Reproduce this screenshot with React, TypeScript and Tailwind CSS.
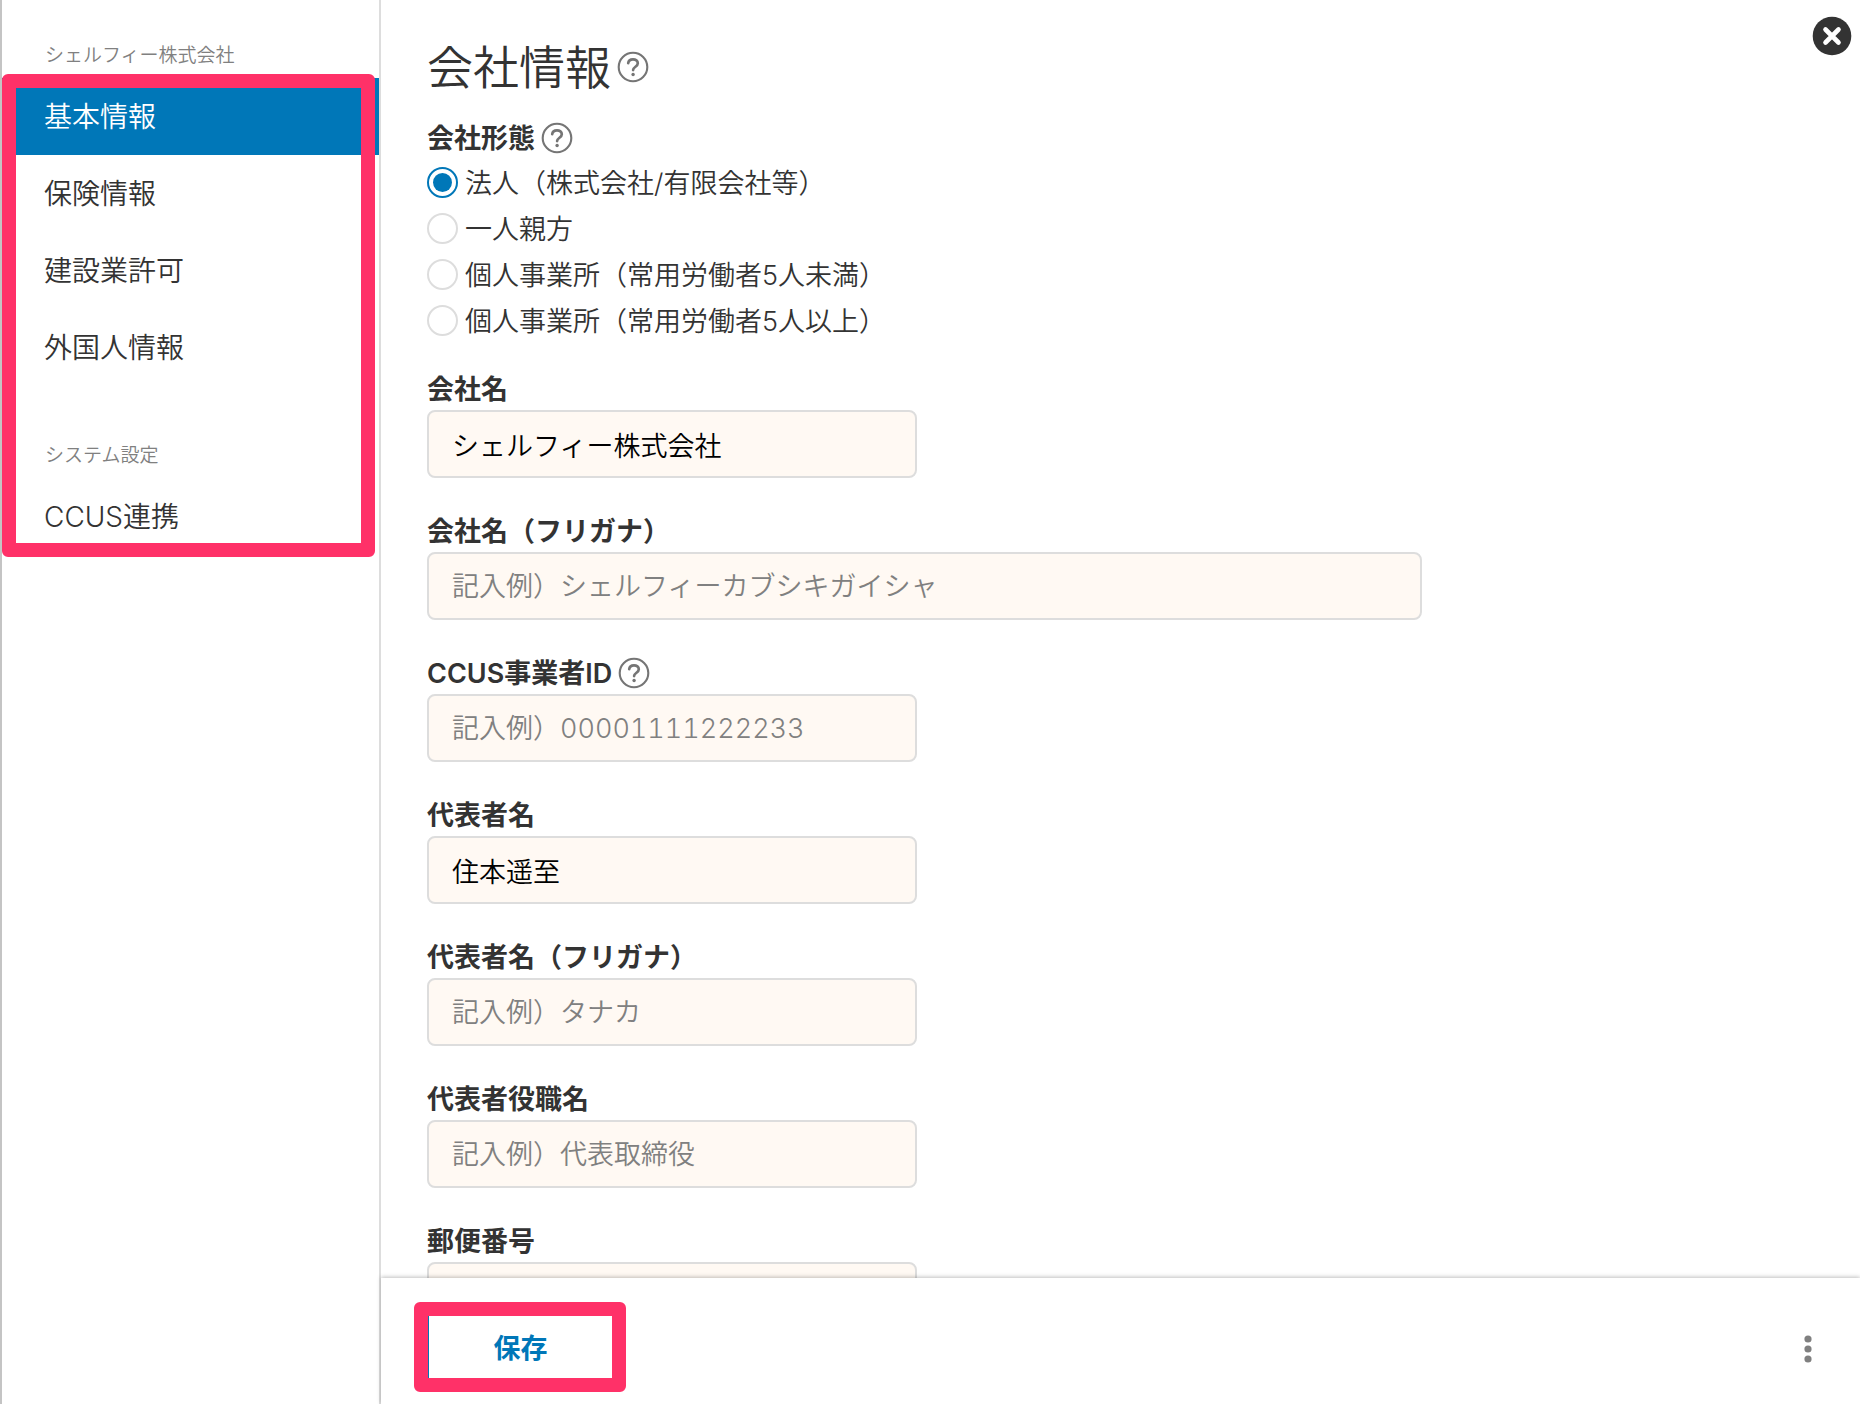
import { useState } from 'react';
import clsx from 'clsx';

interface TextField {
  id: string;
  label: string;
  value?: string;
  placeholder?: string;
  wide?: boolean;
  help?: boolean;
}

const companyMenu = ['基本情報', '保険情報', '建設業許可', '外国人情報'];
const systemMenu = ['CCUS連携'];

const companyTypes = [
  '法人（株式会社/有限会社等）',
  '一人親方',
  '個人事業所（常用労働者5人未満）',
  '個人事業所（常用労働者5人以上）',
];

const fields: TextField[] = [
  { id: 'company-name', label: '会社名', value: 'シェルフィー株式会社' },
  { id: 'company-kana', label: '会社名（フリガナ）', placeholder: '記入例）シェルフィーカブシキガイシャ', wide: true },
  { id: 'ccus-id', label: 'CCUS事業者ID', placeholder: '記入例）00001111222233', help: true },
  { id: 'owner-name', label: '代表者名', value: '住本遥至' },
  { id: 'owner-kana', label: '代表者名（フリガナ）', placeholder: '記入例）タナカ' },
  { id: 'owner-title', label: '代表者役職名', placeholder: '記入例）代表取締役' },
  { id: 'zip', label: '郵便番号' },
];

function HelpButton() {
  return (
    <button type="button" aria-label="ヘルプ" className="shrink-0">
      <svg width="32" height="32" viewBox="0 0 32 32" fill="none" stroke="#757575" strokeLinecap="round">
        <circle cx="16" cy="16" r="14.3" strokeWidth="2.1" />
        <path d="M11.2 12.2c.3-2.4 2.1-3.9 4.8-3.9s4.8 1.6 4.8 3.9c0 1.8-1 2.7-2.6 3.8-1.5 1-2.1 1.7-2.1 3.1" strokeWidth="2.7" />
        <circle cx="16.1" cy="23.5" r="1.7" fill="#757575" stroke="none" />
      </svg>
    </button>
  );
}

interface MenuProps {
  title: string;
  items: string[];
  active: string;
  onSelect: (item: string) => void;
}

function Menu({ title, items, active, onSelect }: MenuProps) {
  return (
    <div>
      <p className="mb-[6px] pl-[43px] text-[19px] leading-8 text-[#808080]">{title}</p>
      <ul>
        {items.map((item) => (
          <li key={item}>
            <button
              type="button"
              onClick={() => onSelect(item)}
              className={clsx(
                'block h-[77px] w-full pt-px pl-[42px] text-left text-[28px]',
                item === active ? 'bg-[#0077b8] text-white' : 'text-[#333]'
              )}
            >
              {item}
            </button>
          </li>
        ))}
      </ul>
    </div>
  );
}

export default function App() {
  const [active, setActive] = useState('基本情報');
  const [companyType, setCompanyType] = useState(companyTypes[0]);

  return (
    <div className="flex h-screen bg-white font-['Inter','Noto_Sans_CJK_JP',sans-serif] font-[350] text-[#333]">
      {/* Sidebar */}
      <nav className="relative w-[381px] shrink-0 border-r-2 border-l-2 border-r-[#ddd] border-l-[#c4c4c4] pt-10">
        <Menu title="シェルフィー株式会社" items={companyMenu} active={active} onSelect={setActive} />
        <div className="mt-[54px]">
          <Menu title="システム設定" items={systemMenu} active={active} onSelect={setActive} />
        </div>
        {/* Highlight frame around the menu */}
        <div className="pointer-events-none absolute top-[74px] right-1 left-0 h-[483px] rounded-md border-14 border-[#ff3168]" />
      </nav>

      <main className="relative flex min-w-0 flex-1 flex-col">
        <div className="min-h-0 flex-1 overflow-y-auto px-[46px] pt-[37px] [scrollbar-width:none]">
          <div className="mb-5 flex items-center gap-[6px]">
            <h1 className="text-[46px] leading-[60px]">会社情報</h1>
            <HelpButton />
          </div>

          <fieldset className="mb-[25px]">
            <legend className="flex h-[42px] items-center gap-[6px] text-[27px] font-semibold">
              <span className="pt-[3px]">会社形態</span>
              <HelpButton />
            </legend>
            {companyTypes.map((type) => (
              <label key={type} className="flex h-[46px] items-center gap-[7px] text-[27px]">
                <input
                  type="radio"
                  name="company-type"
                  checked={companyType === type}
                  onChange={() => setCompanyType(type)}
                  className="grid size-[31px] shrink-0 appearance-none place-items-center rounded-full border-2 border-[#ddd] bg-white before:size-[19px] before:rounded-full checked:border-[#0077b8] checked:before:bg-[#0077b8]"
                />
                <span className="pt-[5px]">{type}</span>
              </label>
            ))}
          </fieldset>

          <div className="space-y-8">
            {fields.map((field) => (
              <div key={field.id}>
                <div className="flex h-[42px] items-center gap-[6px]">
                  <label htmlFor={field.id} className="pt-[3px] text-[27px] font-semibold">
                    {field.label}
                  </label>
                  {field.help && <HelpButton />}
                </div>
                <input
                  id={field.id}
                  type="text"
                  defaultValue={field.value}
                  placeholder={field.placeholder}
                  className={clsx(
                    'block h-[68px] max-w-full rounded-lg border-2 border-[#ddd] bg-[#fff9f3] px-[23px] text-[27px] text-black tabular-nums placeholder:text-[#808080]',
                    field.wide ? 'w-[995px]' : 'w-[490px]'
                  )}
                />
              </div>
            ))}
          </div>
        </div>

        {/* Footer actions */}
        <footer className="z-10 flex h-[126px] shrink-0 items-center justify-between bg-white pr-9 pl-[46px] shadow-[0_-1px_4px_rgba(0,0,0,0.25)]">
          <div className="relative mt-3">
            <button
              type="button"
              className="block h-[74px] w-[187px] rounded-sm border-2 border-[#0077b8] pt-[5px] text-[27px] font-semibold text-[#0077b8]"
            >
              保存
            </button>
            <div className="pointer-events-none absolute -top-2 -right-3 -bottom-2 -left-[13px] rounded-md border-14 border-[#ff3168]" />
          </div>
          <button type="button" aria-label="メニュー" className="mt-4">
            <svg width="32" height="32" viewBox="0 0 32 32" fill="#808080">
              <circle cx="16" cy="6" r="3.6" />
              <circle cx="16" cy="16" r="3.6" />
              <circle cx="16" cy="26" r="3.6" />
            </svg>
          </button>
        </footer>

        <button type="button" aria-label="閉じる" className="absolute top-4 right-2">
          <svg width="40" height="40" viewBox="0 0 40 40">
            <circle cx="20" cy="20" r="19.3" fill="#333" />
            <path d="M13.5 13.5l13 13M26.5 13.5l-13 13" stroke="#fff" strokeWidth="4.6" strokeLinecap="round" />
          </svg>
        </button>
      </main>
    </div>
  );
}
